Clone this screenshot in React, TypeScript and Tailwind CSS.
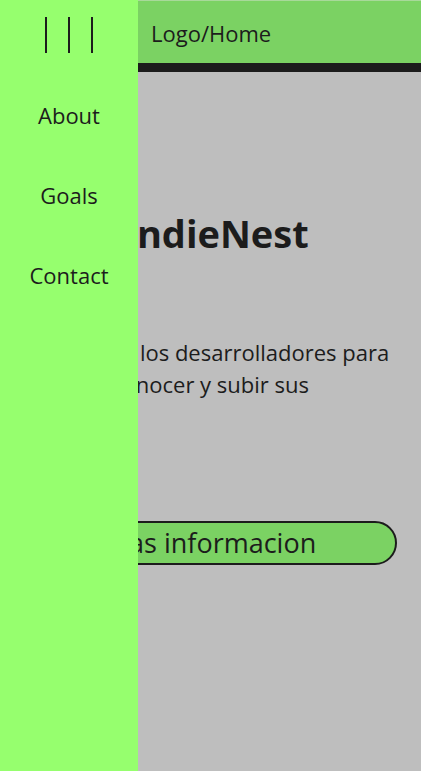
import React from "react";

const navItems = ["About", "Goals", "Contact"];

function MenuIcon() {
  return (
    <svg width="48" height="36" viewBox="0 0 48 36" className="text-[#1c1c1c]">
      <rect x="0" y="0" width="2" height="36" fill="currentColor" />
      <rect x="23" y="0" width="2" height="36" fill="currentColor" />
      <rect x="46" y="0" width="2" height="36" fill="currentColor" />
    </svg>
  );
}

export default function App() {
  return (
    <div className="relative min-h-[771px] bg-[#bebebe] font-['Open_Sans',sans-serif] text-[#1c1c1c]">
      {/* side menu, open over the page */}
      <aside className="absolute inset-y-0 left-0 z-10 flex w-[138px] flex-col items-center bg-[#96ff6e]">
        <div className="flex h-[70px] items-center justify-center">
          <MenuIcon />
        </div>
        <nav className="flex flex-col items-center gap-[50px] pt-[30px] text-[22px]">
          {navItems.map((item) => (
            <a key={item} href="#" className="leading-[30px]">
              {item}
            </a>
          ))}
        </nav>
      </aside>

      <header className="flex h-[72px] items-center border-t border-[#a8d99a] border-b-[9px] border-b-[#1c1c1c] bg-[#7bd263] pl-[151px] pt-[3px] text-[22px]">
        Logo/Home
      </header>

      <main className="flex flex-col items-center px-6 text-center">
        <h1 className="mt-[135px] pl-[12px] text-[38px] font-bold leading-[52px]">IndieNest</h1>
        <p className="mt-[77px] whitespace-nowrap text-[22px] leading-[32px]">
          Ideal para los desarrolladores para
          <br />
          conocer y subir sus
        </p>
        <button className="mt-[121px] h-[44px] w-full rounded-full border-2 border-[#1c1c1c] bg-[#7bd263] text-[27px]">
          Mas informacion
        </button>
      </main>
    </div>
  );
}
